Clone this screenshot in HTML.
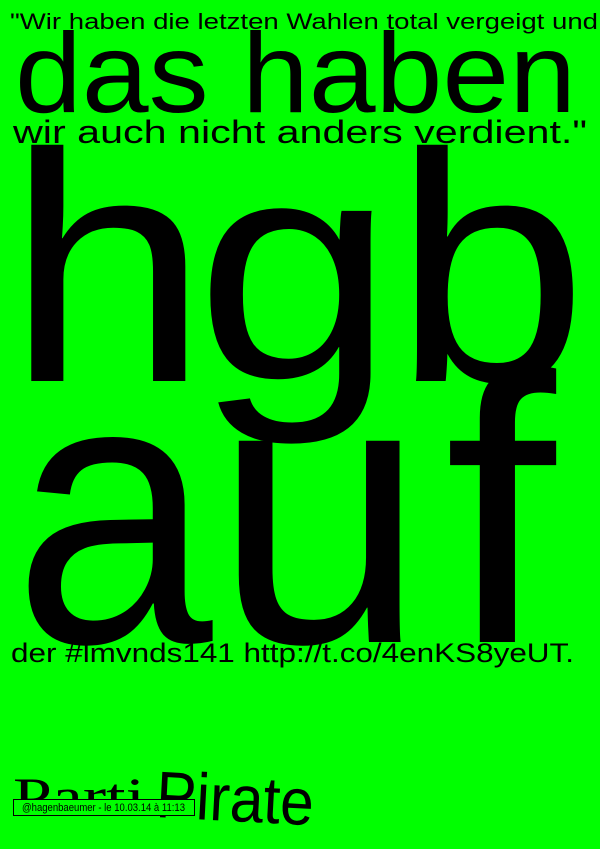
<!DOCTYPE html>
<html><head><meta charset="utf-8"><style>
html,body{margin:0;padding:0;background:#00ff00;}
svg{display:block}
text{font-family:"Liberation Sans",sans-serif;fill:#000}
</style></head><body>
<svg width="600" height="849" viewBox="0 0 600 849" xmlns="http://www.w3.org/2000/svg">
<rect width="600" height="849" fill="#00ff00"/>
<text x="10" y="29" font-size="22" textLength="588" lengthAdjust="spacingAndGlyphs">"Wir haben die letzten Wahlen total vergeigt und</text>
<text x="15" y="112" font-size="113" textLength="561" lengthAdjust="spacingAndGlyphs">das haben</text>
<text x="13" y="143" font-size="32" textLength="574" lengthAdjust="spacingAndGlyphs">wir auch nicht anders verdient."</text>

<g font-size="326">
<text transform="translate(107.5,381) scale(1.12,1)" text-anchor="middle">h</text>
<text transform="translate(295,378) scale(1.1,0.97)" text-anchor="middle">g</text>
<text transform="translate(490.5,381) scale(1.07,1)" text-anchor="middle">b</text>
</g>
<g font-size="381">
<text transform="translate(113,642) scale(0.94,1)" text-anchor="middle">a</text>
<text transform="translate(320,642)" text-anchor="middle">u</text>
<text transform="translate(500,642) scale(1.05,1)" text-anchor="middle">f</text>
</g>

<text x="11" y="662" font-size="27" textLength="563" lengthAdjust="spacingAndGlyphs">der #lmvnds141 http://t.co/4enKS8yeUT.</text>

<text x="13" y="815" font-size="54" style="font-family:'Liberation Serif',serif" textLength="132" lengthAdjust="spacingAndGlyphs">Parti</text>
<text transform="translate(155,817) rotate(3)" font-size="66" textLength="158" lengthAdjust="spacingAndGlyphs">Pirate</text>
<rect x="13.5" y="799.5" width="181" height="16" fill="#00ff00" stroke="#000" stroke-width="1"/>
<text x="22" y="811" font-size="11" textLength="163" lengthAdjust="spacingAndGlyphs">@hagenbaeumer - le 10.03.14 à 11:13</text>
</svg>
</body></html>
